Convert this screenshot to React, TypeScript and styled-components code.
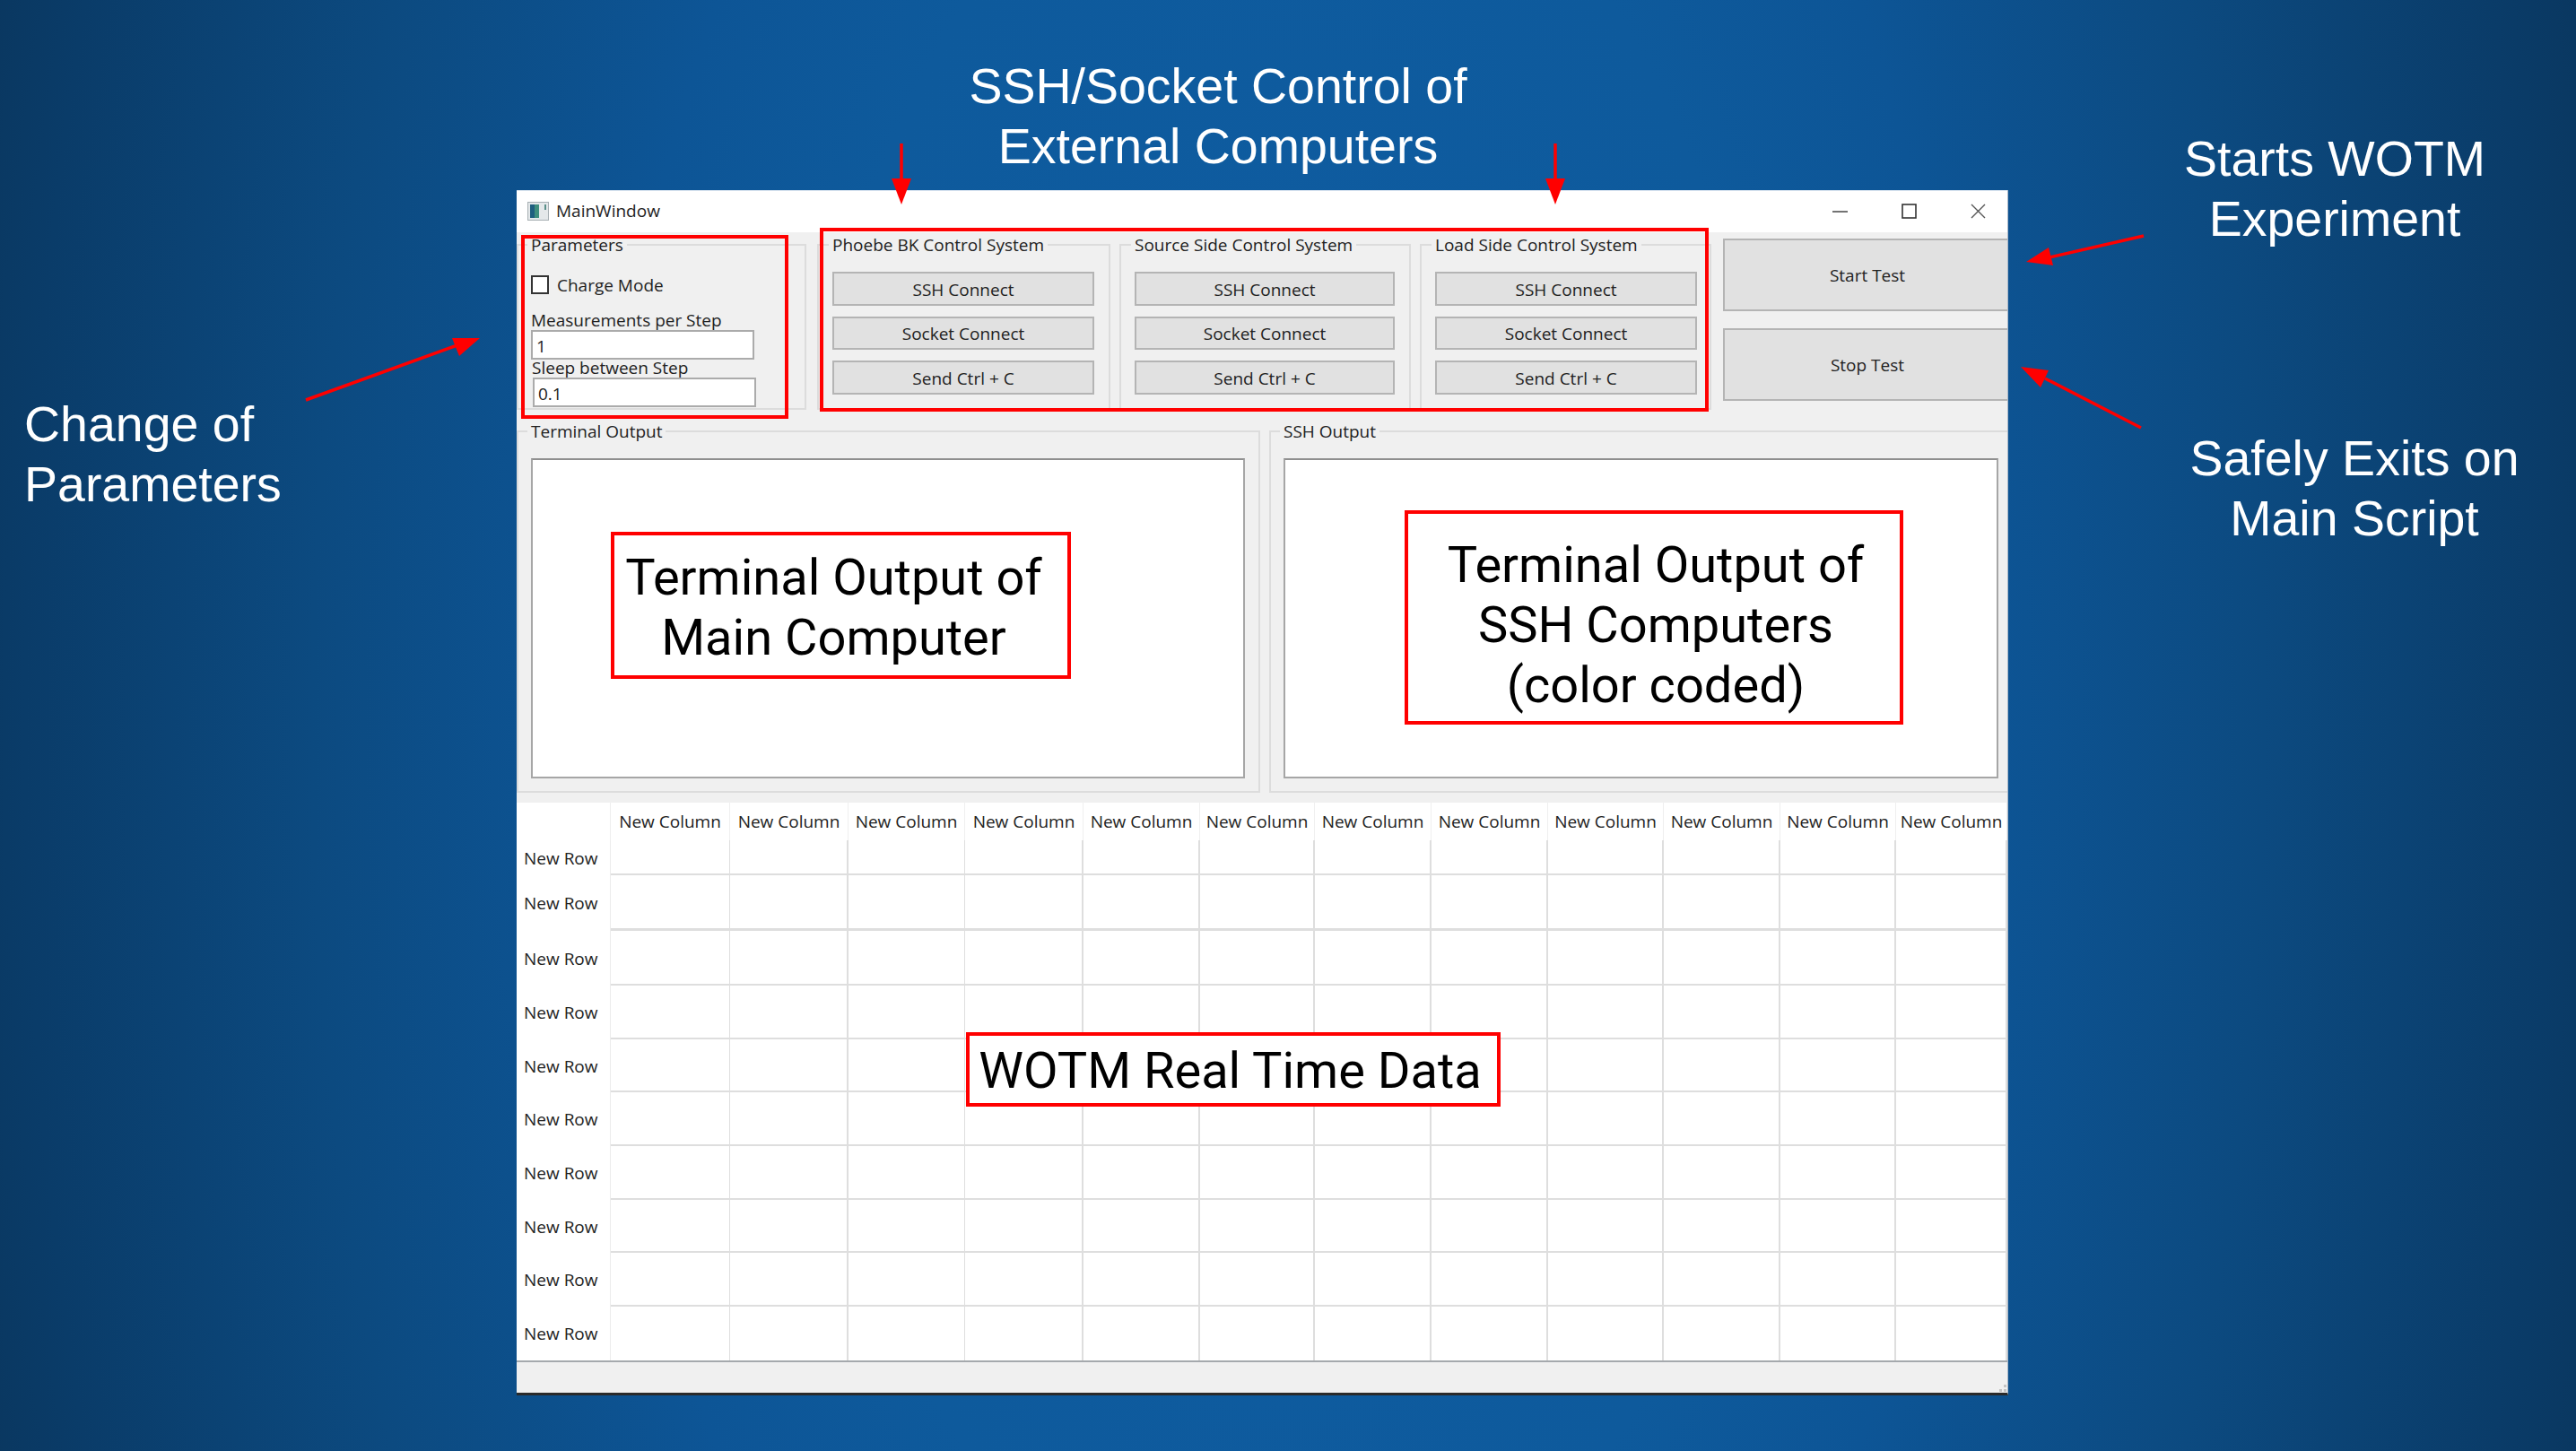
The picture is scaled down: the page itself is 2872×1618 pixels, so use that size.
import React from "react";
import styled, { createGlobalStyle } from "styled-components";

const colWidths = [105, 133, 132, 130, 132, 130, 128, 130, 130, 129, 130, 129, 124];
const rowHeights = [39, 62, 61, 60, 59, 60, 60, 59, 60, 60];
// the first and third column rules are hairlines in the real grid
const thinCols = [0, 2];

const controlSystems = [
  { name: "Phoebe BK Control System", width: 327, rightPad: 16 },
  { name: "Source Side Control System", width: 325, rightPad: 16 },
  { name: "Load Side Control System", width: 325, rightPad: 14 },
];

function ControlGroup({ name, width, rightPad }: { name: string; width: number; rightPad: number }) {
  return (
    <ControlBox $width={width} $rightPad={rightPad}>
      <Legend>{name}</Legend>
      <Button>SSH Connect</Button>
      <Button>Socket Connect</Button>
      <Button>Send Ctrl + C</Button>
    </ControlBox>
  );
}

function DataTable() {
  return (
    <Table>
      <colgroup>
        {colWidths.map((w, i) => (
          <col key={i} width={w} />
        ))}
      </colgroup>
      <thead>
        <tr>
          <Corner />
          {colWidths.slice(1).map((_, i) => (
            <ColHead key={i}>New Column</ColHead>
          ))}
        </tr>
      </thead>
      <tbody>
        {rowHeights.map((h, r) => (
          <tr key={r}>
            <RowHead $height={h}>New Row</RowHead>
            {colWidths.slice(1).map((_, c) => (
              <Cell key={c} $thickRow={r === 1} $thinCol={thinCols.includes(c)} $last={r === rowHeights.length - 1} />
            ))}
          </tr>
        ))}
      </tbody>
    </Table>
  );
}

export default function App() {
  return (
    <Slide>
      <GlobalStyle />
      <Window>
        <TitleBar>
          <AppIcon viewBox="0 0 24 21">
            <rect x="0.5" y="0.5" width="23" height="20" fill="#e4e8ea" stroke="#a8b0b4" />
            <rect x="3" y="3" width="10" height="15" fill="#3f8f7e" />
            <rect x="3" y="3" width="5" height="15" fill="#1f5f80" />
            <rect x="19" y="3" width="2" height="6" fill="#5a8f8a" />
          </AppIcon>
          <TitleText>MainWindow</TitleText>
          <WindowControls>
            <ControlIcon viewBox="0 0 17 17">
              <line x1="0" y1="9" x2="17" y2="9" stroke="#444" strokeWidth="1.5" />
            </ControlIcon>
            <ControlIcon viewBox="0 0 17 17">
              <rect x="1" y="1" width="15" height="15" fill="none" stroke="#333" strokeWidth="1.6" />
            </ControlIcon>
            <ControlIcon viewBox="0 0 17 17">
              <path d="M1 1 L16 16 M16 1 L1 16" fill="none" stroke="#555" strokeWidth="1.4" />
            </ControlIcon>
          </WindowControls>
        </TitleBar>
        <Body>
          <TopRow>
            <ParamsBox>
              <Legend>Parameters</Legend>
              <CheckRow>
                <CheckBox type="checkbox" readOnly />
                <span>Charge Mode</span>
              </CheckRow>
              <FieldLabel $gap={18}>Measurements per Step</FieldLabel>
              <FieldInput readOnly value="1" $shift={0} />
              <FieldLabel $gap={0} $shift={1}>Sleep between Step</FieldLabel>
              <FieldInput readOnly value="0.1" $shift={2} />
            </ParamsBox>
            <ControlGroups>
              {controlSystems.map((s) => (
                <ControlGroup key={s.name} name={s.name} width={s.width} rightPad={s.rightPad} />
              ))}
            </ControlGroups>
            <SideButtons>
              <SideButton>Start Test</SideButton>
              <SideButton>Stop Test</SideButton>
            </SideButtons>
          </TopRow>
          <OutputRow>
            <OutputBox $width={829}>
              <Legend>Terminal Output</Legend>
              <OutputText $width={796} />
            </OutputBox>
            <OutputBox $width={828}>
              <Legend>SSH Output</Legend>
              <OutputText $width={797} />
            </OutputBox>
          </OutputRow>
          <DataTable />
          <StatusBar>
            <SizeGrip viewBox="0 0 8 8">
              <rect x="5" y="0" width="3" height="3" fill="#c4c4c4" />
              <rect x="5" y="5" width="3" height="3" fill="#c4c4c4" />
              <rect x="0" y="5" width="3" height="3" fill="#c4c4c4" />
            </SizeGrip>
          </StatusBar>
        </Body>
      </Window>

      <Outline $left={581} $top={262} $width={298} $height={205} />
      <Outline $left={914} $top={254} $width={991} $height={205} />

      <NoteBox $left={681} $top={593} $width={513} $height={164} $pad="5px 16px 0 0">
        Terminal Output of
        <br />
        Main Computer
      </NoteBox>
      <NoteBox $left={1566} $top={569} $width={556} $height={239} $pad="18px 0 0 4px">
        Terminal Output of
        <br />
        SSH Computers
        <br />
        (color coded)
      </NoteBox>
      <NoteBox $left={1077} $top={1151} $width={596} $height={83} $pad="3px 7px 0 0">
        WOTM Real Time Data
      </NoteBox>

      <Caption $left={1058} $top={63} $width={600} $align="center">
        SSH/Socket Control of
        <br />
        External Computers
      </Caption>
      <Caption $left={2303} $top={144} $width={600} $align="center">
        Starts WOTM
        <br />
        Experiment
      </Caption>
      <Caption $left={2325} $top={478} $width={600} $align="center">
        Safely Exits on
        <br />
        Main Script
      </Caption>
      <Caption $left={27} $top={440} $width={400} $align="left">
        Change of
        <br />
        Parameters
      </Caption>

      <Arrows viewBox="0 0 2872 1618">
        <g stroke="#ff0000" strokeWidth="3.5" fill="none">
          <line x1="341" y1="446" x2="515" y2="383" />
          <line x1="1005" y1="160" x2="1005" y2="200" />
          <line x1="1734" y1="160" x2="1734" y2="200" />
          <line x1="2390" y1="263" x2="2285" y2="287" />
          <line x1="2387" y1="477" x2="2280" y2="422" />
        </g>
        <g fill="#ff0000">
          <polygon points="535,377 504,377 512,397" />
          <polygon points="994,199 1016,199 1005,228" />
          <polygon points="1723,199 1745,199 1734,228" />
          <polygon points="2259,292 2284,276 2289,296" />
          <polygon points="2253,409 2284,413 2275,432" />
        </g>
      </Arrows>
    </Slide>
  );
}

const GlobalStyle = createGlobalStyle`
  html, body {
    margin: 0;
    padding: 0;
  }
  * {
    box-sizing: border-box;
  }
`;

const Slide = styled.div`
  position: relative;
  width: 2872px;
  height: 1618px;
  padding: 212px 0 0 576px;
  overflow: hidden;
  background: radial-gradient(ellipse 1600px 3000px at 50% 50%, #0f5da3 0%, #0e5a9c 35%, #0d5596 48%, #0c4a80 68%, #0a3c69 88%, #0a3358 100%);
  font-family: "Open Sans", sans-serif;
  font-size: 19px;
  color: #222;
`;

const Window = styled.div`
  width: 1663px;
  height: 1344px;
  display: flex;
  flex-direction: column;
  background: #ffffff;
  overflow: hidden;
  border-right: 1px solid #a9b8c8;
  border-bottom: 3px solid #2a2a2a;
`;

const TitleBar = styled.div`
  height: 47px;
  flex-shrink: 0;
  display: flex;
  align-items: center;
  padding: 0 0 2px 12px;
  background: #ffffff;
  border-top: 1px solid #dfe8f2;
`;

const AppIcon = styled.svg`
  width: 24px;
  height: 21px;
`;

const TitleText = styled.span`
  margin-left: 8px;
  font-size: 19px;
`;

const WindowControls = styled.div`
  margin-left: auto;
  display: flex;
  gap: 60px;
  padding-right: 24px;
`;

const ControlIcon = styled.svg`
  width: 17px;
  height: 17px;
`;

const Body = styled.div`
  flex: 1;
  display: flex;
  flex-direction: column;
  background: #f0f0f0;
`;

const TopRow = styled.div`
  height: 198px;
  flex-shrink: 0;
  display: flex;
  gap: 12px;
  padding-top: 2px;
`;

const Group = styled.fieldset`
  margin: 0;
  padding: 0;
  min-width: 0;
  border: 2px solid #dcdcdc;
`;

const Legend = styled.legend`
  margin-left: -4px;
  padding: 0 4px;
  height: 24px;
  line-height: 24px;
  white-space: nowrap;
`;

const ParamsBox = styled(Group)`
  width: 323px;
  flex-shrink: 0;
  padding: 22px 0 0 14px;
`;

const CheckRow = styled.div`
  height: 21px;
  display: flex;
  align-items: center;
  gap: 9px;
`;

const CheckBox = styled.input`
  appearance: none;
  margin: 0;
  width: 20px;
  height: 21px;
  background: #ffffff;
  border: 2px solid #333;
`;

const FieldLabel = styled.div<{ $gap: number; $shift?: number }>`
  margin-top: ${(p) => p.$gap}px;
  margin-left: ${(p) => p.$shift ?? 0}px;
  height: ${(p) => (p.$gap ? 22 : 20)}px;
  line-height: ${(p) => (p.$gap ? 22 : 18)}px;
  white-space: nowrap;
`;

const FieldInput = styled.input<{ $shift: number }>`
  display: block;
  margin-left: ${(p) => p.$shift}px;
  width: 249px;
  height: 33px;
  padding: 2px 0 0 4px;
  background: #ffffff;
  border: 2px solid #ababab;
  font: inherit;
  color: #222;
  outline: none;
`;

const ControlGroups = styled.div`
  display: flex;
  gap: 10px;
  flex-shrink: 0;
`;

const ControlBox = styled(Group)<{ $width: number; $rightPad: number }>`
  width: ${(p) => p.$width}px;
  padding: 18px ${(p) => p.$rightPad}px 0 15px;
  display: flex;
  flex-direction: column;
  gap: 12px;
`;

const Button = styled.button`
  height: 37.5px;
  padding: 2px 0 0;
  background: #e1e1e1;
  border: 2px solid #b4b4b4;
  font: inherit;
  color: #222;
`;

const SideButtons = styled.div`
  margin: 5px -30px 0 1px;
  width: 348px;
  flex-shrink: 0;
  display: flex;
  flex-direction: column;
  gap: 19px;
`;

const SideButton = styled.button`
  height: 81px;
  padding: 0 26px 0 0;
  background: #e1e1e1;
  border: 2px solid #b4b4b4;
  font: inherit;
  color: #222;
`;

const OutputRow = styled.div`
  margin-top: 12px;
  display: flex;
  gap: 10px;
  flex-shrink: 0;
`;

const OutputBox = styled(Group)<{ $width: number }>`
  width: ${(p) => p.$width}px;
  height: 415px;
  flex-shrink: 0;
  padding: 18px 0 0 14px;
`;

const OutputText = styled.div<{ $width: number }>`
  width: ${(p) => p.$width}px;
  height: 357px;
  background: #ffffff;
  border: 2px solid #a6a6a6;
  border-top-color: #8f8f8f;
`;

const Table = styled.table`
  margin-top: 11px;
  width: 1662px;
  height: 622px;
  flex-shrink: 0;
  table-layout: fixed;
  border-collapse: separate;
  border-spacing: 0;
  background: #ffffff;
`;

const Corner = styled.th`
  height: 42px;
  padding: 0;
  border-right: 1px solid #efefef;
`;

const ColHead = styled.th`
  height: 42px;
  padding: 0;
  font-weight: 400;
  text-align: center;
  white-space: nowrap;
  overflow: hidden;
  border-right: 1px solid #efefef;
`;

const RowHead = styled.th<{ $height: number }>`
  height: ${(p) => p.$height}px;
  padding: 0 0 0 8px;
  font-weight: 400;
  text-align: left;
  white-space: nowrap;
  border-right: 1px solid #ececec;
`;

const Cell = styled.td<{ $thickRow: boolean; $thinCol: boolean; $last: boolean }>`
  padding: 0;
  border-right: ${(p) => (p.$thinCol ? 1 : 2)}px solid #dedede;
  border-bottom: ${(p) => (p.$last ? 0 : p.$thickRow ? 3 : 2)}px solid #dedede;
`;

const StatusBar = styled.div`
  flex: 1;
  position: relative;
  background: #f0f0f0;
  border-top: 2px solid #a5a9ad;
`;

const SizeGrip = styled.svg`
  position: absolute;
  right: 1px;
  bottom: 1px;
  width: 8px;
  height: 8px;
`;

const Outline = styled.div<{ $left: number; $top: number; $width: number; $height: number }>`
  position: absolute;
  left: ${(p) => p.$left}px;
  top: ${(p) => p.$top}px;
  width: ${(p) => p.$width}px;
  height: ${(p) => p.$height}px;
  border: 4px solid #ff0000;
`;

const NoteBox = styled(Outline)<{ $pad: string }>`
  display: flex;
  align-items: center;
  justify-content: center;
  padding: ${(p) => p.$pad};
  text-align: center;
  background: #ffffff;
  font-family: Roboto, sans-serif;
  font-size: 56px;
  line-height: 67px;
  color: #000000;
  white-space: nowrap;
`;

const Caption = styled.div<{ $left: number; $top: number; $width: number; $align: string }>`
  position: absolute;
  left: ${(p) => p.$left}px;
  top: ${(p) => p.$top}px;
  width: ${(p) => p.$width}px;
  text-align: ${(p) => p.$align};
  font-family: "Liberation Sans", sans-serif;
  font-size: 55.5px;
  line-height: 67px;
  color: #ffffff;
`;

const Arrows = styled.svg`
  position: absolute;
  left: 0;
  top: 0;
  width: 2872px;
  height: 1618px;
  pointer-events: none;
`;
